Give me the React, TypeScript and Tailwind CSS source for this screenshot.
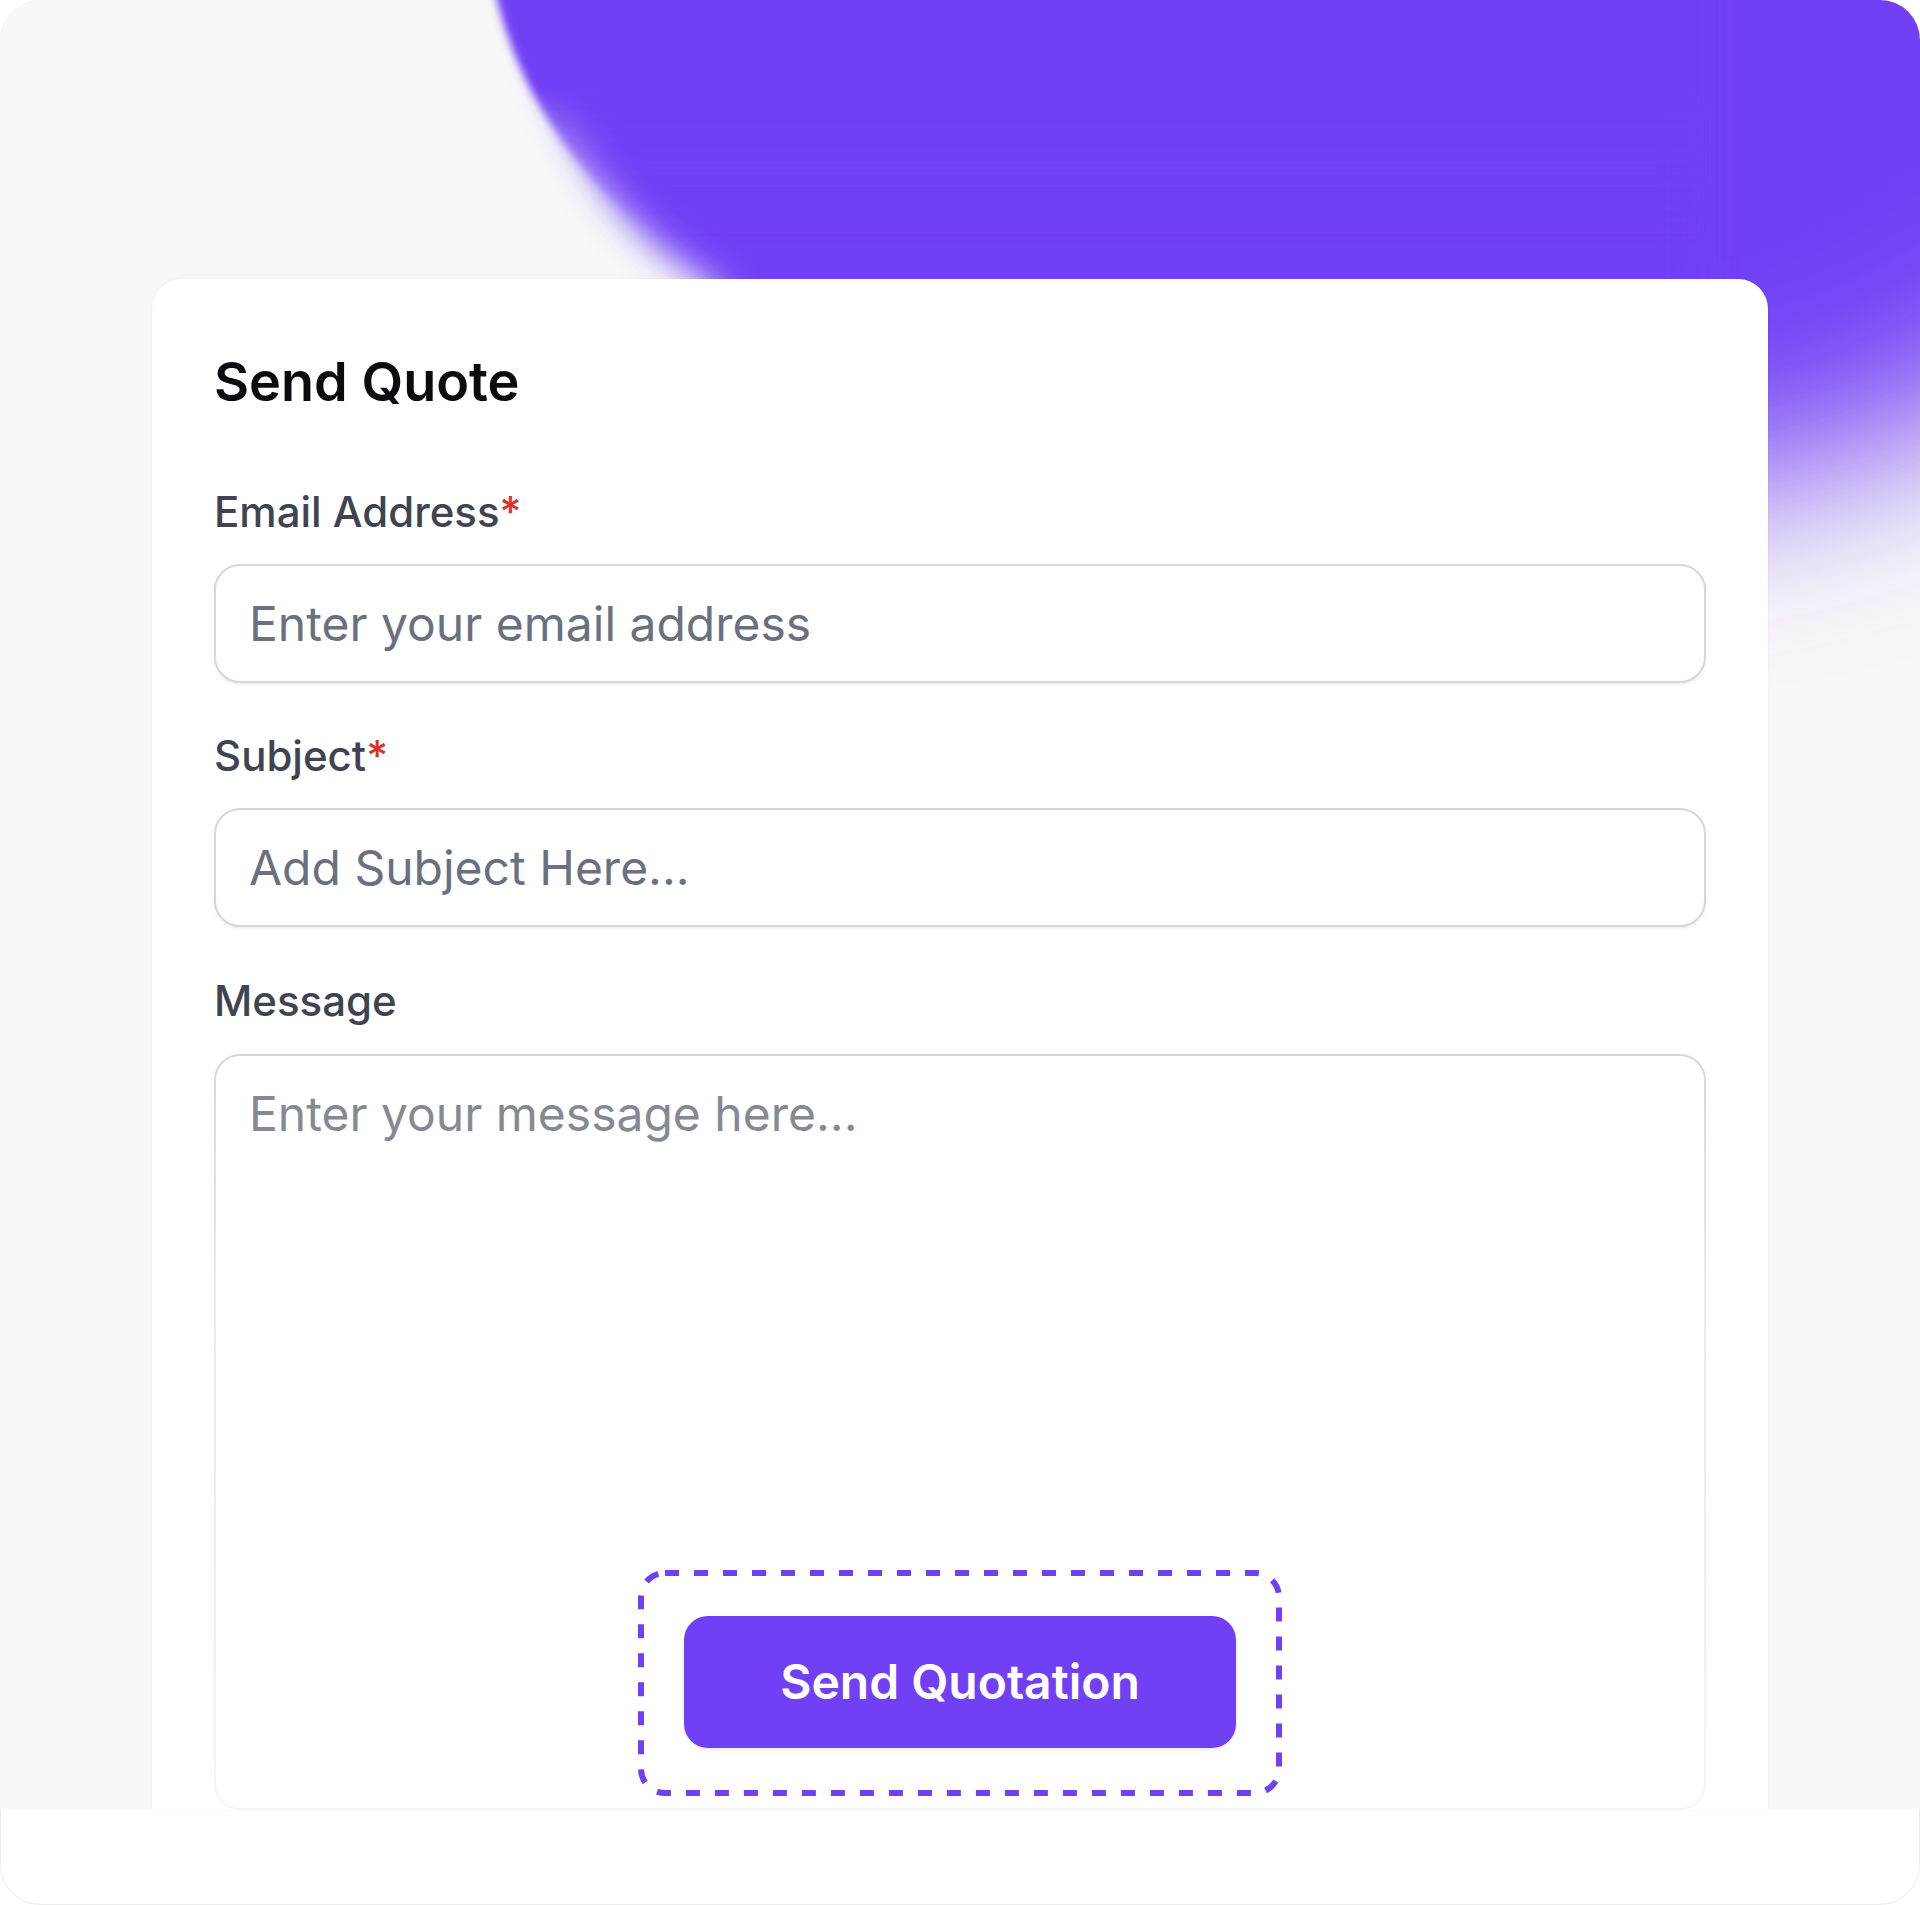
import React from "react";

const PURPLE = "#7140f5";

function Blob() {
  return (
    <svg
      className="pointer-events-none absolute left-0 top-0"
      width={1920}
      height={1810}
      viewBox="0 0 1920 1810"
      aria-hidden="true"
    >
      <defs>
        <filter id="bBig" filterUnits="userSpaceOnUse" x="-800" y="-1400" width="4000" height="3000">
          <feGaussianBlur stdDeviation="88" />
        </filter>
        <filter id="bMid" filterUnits="userSpaceOnUse" x="-200" y="-400" width="2600" height="1400">
          <feGaussianBlur stdDeviation="18" />
        </filter>
        <filter id="bSmall" filterUnits="userSpaceOnUse" x="-200" y="-400" width="2600" height="1400">
          <feGaussianBlur stdDeviation="4" />
        </filter>
        <linearGradient id="fadeA" gradientUnits="userSpaceOnUse" x1="0" y1="90" x2="0" y2="240">
          <stop offset="0" stopColor={PURPLE} stopOpacity="1" />
          <stop offset="1" stopColor={PURPLE} stopOpacity="0" />
        </linearGradient>
      </defs>
      <ellipse cx="1620" cy="-50" rx="640" ry="540" fill={PURPLE} filter="url(#bBig)" />
      <path
        d="M600,-120 L545,40 C570,160 630,240 720,290 L740,560 L1700,560 L1700,-120 Z"
        fill={PURPLE}
        filter="url(#bMid)"
      />
      <path
        d="M380,-120 L470,-120 L497,0 C520,90 575,190 720,290 L740,560 L1700,560 L1700,-120 Z"
        fill="url(#fadeA)"
        filter="url(#bSmall)"
      />
    </svg>
  );
}

function Label({ text, required }: { text: string; required?: boolean }) {
  return (
    <label className="block text-[42px] font-medium leading-[42px] text-[#404452]">
      {text}
      {required && <span className="text-[#e0302a]">*</span>}
    </label>
  );
}

function DashedFrame({ children }: { children: React.ReactNode }) {
  return (
    <div className="relative p-[46px]">
      <svg
        className="pointer-events-none absolute inset-0"
        width={644}
        height={226}
        viewBox="0 0 644 226"
        aria-hidden="true"
      >
        <rect
          x={3}
          y={3}
          width={638}
          height={220}
          rx={24}
          ry={24}
          fill="none"
          stroke={PURPLE}
          strokeWidth={6}
          strokeDasharray="14 15"
        />
      </svg>
      {children}
    </div>
  );
}

export default function App() {
  return (
    <div className="min-h-[1905px] w-full bg-white font-[Inter,sans-serif]">
      <div className="relative h-[1905px] w-[1920px] overflow-hidden rounded-[40px] bg-white ring-1 ring-inset ring-[#ececef]">
        <div className="relative flex h-[1810px] flex-col bg-[#f8f8f8] px-[152px] pt-[279px]">
          <Blob />
          <div className="relative flex flex-1 flex-col rounded-t-[30px] bg-white px-[62px] pt-[76px] shadow-[0_0_3px_rgba(0,0,0,0.05)]">
            <h1 className="text-[54px] font-semibold leading-[54px] text-[#0b0b10]">Send Quote</h1>

            <div className="mt-[82px] flex flex-col gap-[31px]">
              <Label text="Email Address" required />
              <input
                type="email"
                placeholder="Enter your email address"
                className="h-[119px] w-full rounded-[26px] border-2 border-[#d6d6db] bg-white px-[33px] text-[48px] text-[#111] shadow-[0_2px_3px_rgba(16,24,40,0.06)] outline-none placeholder:text-[#6b7080]"
              />
            </div>

            <div className="mt-[52px] flex flex-col gap-[31px]">
              <Label text="Subject" required />
              <input
                type="text"
                placeholder="Add Subject Here..."
                className="h-[119px] w-full rounded-[26px] border-2 border-[#d6d6db] bg-white px-[33px] text-[48px] text-[#111] shadow-[0_2px_3px_rgba(16,24,40,0.06)] outline-none placeholder:text-[#6b7080]"
              />
            </div>

            <div className="mt-[53px] flex flex-1 flex-col gap-[32px]">
              <Label text="Message" />
              <div className="flex-1 rounded-[26px] bg-[linear-gradient(to_bottom,#d6d6db_0%,#e8e8ed_30%,#f4f4f7_100%)] p-[2px]">
                <div className="flex h-full flex-col items-center rounded-[24px] bg-white pb-[14px]">
                  <textarea
                    placeholder="Enter your message here..."
                    className="w-full flex-1 resize-none bg-transparent px-[33px] pt-[22px] text-[48px] leading-[72px] text-[#111] outline-none placeholder:text-[#868993]"
                  />
                  <DashedFrame>
                    <button
                      type="button"
                      className="flex h-[132px] w-[552px] items-center justify-center rounded-[24px] bg-[#7140f5] text-[48px] font-semibold text-white shadow-[0_2px_4px_rgba(0,0,0,0.08)]"
                    >
                      Send Quotation
                    </button>
                  </DashedFrame>
                </div>
              </div>
            </div>
          </div>
        </div>
      </div>
    </div>
  );
}
